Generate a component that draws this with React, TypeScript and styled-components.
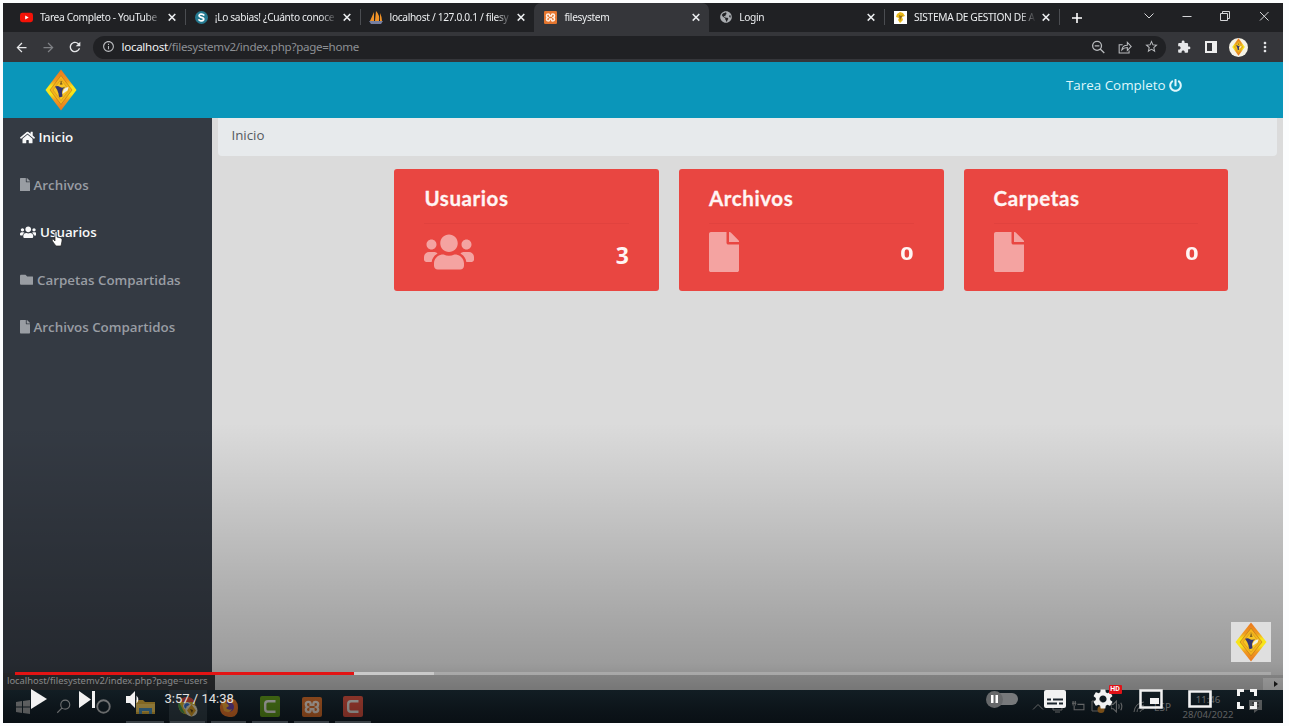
import React from "react";
import styled, { createGlobalStyle } from "styled-components";
import { FaHome, FaFile, FaUsers, FaFolder, FaPowerOff, FaGlobeAmericas } from "react-icons/fa";
import { MdArrowBack, MdArrowForward, MdRefresh, MdInfoOutline, MdExtension, MdStarBorder, MdMoreVert, MdSettings } from "react-icons/md";

const Global = createGlobalStyle`
  * { box-sizing: border-box; }
  body { margin: 0; background: #fcfdfe; font-family: "Open Sans", sans-serif; overflow: hidden; }
  svg { display: block; flex: none; }
`;

const Player = styled.div`
  position: relative;
  display: flex;
  flex-direction: column;
  width: 1280px;
  height: 720px;
  margin: 3px 0 0 3px;
  overflow: hidden;
  background: #dbdbdb;
`;

/* Browser window */
const TabStrip = styled.div`
  display: flex;
  height: 29px;
  padding-left: 7px;
  background: #202124;
  color: #fff;
`;
const Tab = styled.div<{ $active?: boolean; $line?: boolean }>`
  display: flex;
  align-items: center;
  width: 174.8px;
  height: 29px;
  padding: 0 7px 1px 10px;
  border-radius: 7px 7px 0 0;
  background: ${(p) => (p.$active ? "#35363a" : "transparent")};
  color: #eceef0;
  &::after {
    content: "";
    width: 1px;
    height: 16px;
    margin: 0 -8px 0 7px;
    background: ${(p) => (p.$line ? "#4b4d51" : "transparent")};
  }
`;
const TabTitle = styled.span`
  width: 122px;
  margin: 0 4px 0 7px;
  white-space: nowrap;
  font: 10.2px/14px "Noto Sans", sans-serif;
  letter-spacing: -0.34px;
  mask-image: linear-gradient(90deg, #000 106px, transparent 122px);
`;
const Slot = styled.span<{ $w: number }>`
  display: flex;
  flex: none;
  align-items: center;
  justify-content: center;
  width: ${(p) => p.$w}px;
`;
const WindowButtons = styled.div`
  display: flex;
  margin-left: auto;
  align-items: center;
  padding-bottom: 3px;
  color: #d5d6d8;
`;
const Toolbar = styled.div`
  display: flex;
  align-items: center;
  height: 30px;
  padding-left: 5px;
  background: #35363a;
  color: #e6e7e9;
`;
const AddressBar = styled.div`
  display: flex;
  align-items: center;
  width: 1073px;
  height: 23px;
  margin: 0 5px 0 5px;
  padding: 0 2px 1px 9px;
  border-radius: 12px;
  background: #202124;
  color: #b9bbbe;
`;
const Url = styled.span`
  margin: 0 auto 0 6.5px;
  font: 11.6px/20px "Noto Sans", sans-serif;
  letter-spacing: -0.3px;
  color: #8d9094;
  b { font-weight: 400; color: #f0f1f2; }
`;
const Avatar = styled.span`
  display: flex;
  align-items: center;
  justify-content: center;
  width: 19px;
  height: 19px;
  border-radius: 50%;
  background: #f6f3e6;
`;

/* Web page */
const PageHeader = styled.header`
  display: flex;
  justify-content: space-between;
  height: 56px;
  padding: 7px 101px 0 42px;
  background: #0a96ba;
`;
const Account = styled.div`
  display: flex;
  align-items: center;
  gap: 3.5px;
  height: 32px;
  color: #dff6fb;
  font-size: 13.4px;
`;
const PageBody = styled.div`
  display: flex;
  height: 557px;
`;
const Sidebar = styled.nav`
  width: 209px;
  padding-top: 7px;
  background: #343a43;
`;
const NavItem = styled.a<{ $lit?: boolean }>`
  display: flex;
  align-items: center;
  gap: 4px;
  height: 24px;
  margin-bottom: 23.5px;
  padding-left: 16.5px;
  color: ${(p) => (p.$lit ? "#f8f9fa" : "#999da3")};
  font-size: 13.35px;
  font-weight: 600;
  white-space: nowrap;
`;
const Content = styled.main`
  flex: 1;
  padding: 0 6px;
  background: #dbdbdb;
`;
const Breadcrumb = styled.div`
  height: 38px;
  padding: 7px 13.5px;
  border-radius: 0 0 4px 4px;
  background: #e7eaec;
  color: #555a60;
  font-size: 13.3px;
  line-height: 20px;
`;
const Cards = styled.section`
  display: flex;
  gap: 20px;
  padding: 13px 0 0 176.4px;
`;
const Card = styled.article`
  width: 264.6px;
  height: 121.5px;
  padding: 16px 30px 0;
  border-radius: 3px;
  background: #e94641;
  color: #fff5f4;
`;
const CardTitle = styled.h4`
  height: 38px;
  margin: 0;
  font: 700 20.5px/26px Lato, sans-serif;
  letter-spacing: 0.6px;
  -webkit-text-stroke: 0.3px currentColor;
`;
const CardRow = styled.div`
  display: flex;
  align-items: flex-start;
  justify-content: space-between;
  border-top: 1px solid #e1423e;
  padding-top: 8px;
`;
const CardIcon = styled.span<{ $w: number }>`
  color: #f4a3a1;
  svg {
    width: ${(p) => p.$w}px;
    height: 40px;
  }
`;
const Count = styled.b<{ $zero?: boolean }>`
  font: 700 ${(p) => (p.$zero ? 18.5 : 23)}px/28px "Open Sans", sans-serif;
  margin-top: ${(p) => (p.$zero ? 7 : 9)}px;
  transform: scaleX(${(p) => (p.$zero ? 1.25 : 1)});
  transform-origin: right;
`;

/* Desktop edge */
const ScrollRow = styled.div`
  display: flex;
  justify-content: flex-end;
  height: 15px;
  padding-top: 3px;
  background: #c2c2c2;
`;
const ScrollEnd = styled.div`
  display: flex;
  align-items: center;
  justify-content: center;
  width: 20px;
  padding-left: 5px;
  background: #e0e0e0;
`;
const StatusBubble = styled.div`
  position: absolute;
  left: 0;
  top: 670px;
  width: 212px;
  height: 17px;
  padding: 0 4px;
  background: #35373a;
  color: #d0d1d3;
  font: 9.4px/16px "Noto Sans", sans-serif;
  white-space: nowrap;
`;
const Taskbar = styled.div`
  display: flex;
  height: 33px;
  background: linear-gradient(#1d303b, #14202a);
  color: #c6c9cb;
`;
const Task = styled.div<{ $w: number; $open?: boolean; $active?: boolean }>`
  display: flex;
  align-items: center;
  justify-content: center;
  width: ${(p) => p.$w}px;
  background: ${(p) => (p.$active ? "#34434d" : "transparent")};
  background-clip: content-box;
  padding: 0 1.5px;
  position: relative;
  &::after {
    content: "";
    position: absolute;
    left: 3px;
    right: 3px;
    bottom: 0;
    height: 2px;
    background: ${(p) => (p.$open ? "#75848f" : "transparent")};
  }
`;
const AppTile = styled.span<{ $c: string }>`
  display: flex;
  align-items: center;
  justify-content: center;
  width: 20px;
  height: 21px;
  border-radius: 2px;
  background: ${(p) => p.$c};
`;
const Tray = styled.div`
  display: flex;
  align-items: center;
  margin-left: auto;
  padding-right: 10px;
  font: 10px/14px "Noto Sans", sans-serif;
  color: #b5b8ba;
`;
const Clock = styled.div`
  width: 60px;
  margin-left: 3px;
  text-align: center;
  font: 9.6px/15px "Noto Sans", sans-serif;
`;

/* Video overlay */
const Shade = styled.div`
  position: absolute;
  inset: 420px 0 0 0;
  background: linear-gradient(rgba(0,0,0,0), rgba(0,0,0,.05) 15%, rgba(0,0,0,.16) 45%, rgba(0,0,0,.29) 80%, rgba(0,0,0,.4) 90%, rgba(0,0,0,.52));
`;
const Watermark = styled.div`
  position: absolute;
  left: 1228px;
  top: 619px;
  display: flex;
  align-items: center;
  justify-content: center;
  width: 40px;
  height: 40px;
  background: #dfdfdf;
`;
const Progress = styled.div`
  position: absolute;
  left: 12px;
  right: 12px;
  top: 669px;
  display: flex;
  height: 3px;
  background: rgba(255,255,255,.2);
`;
const Part = styled.i<{ $w: number; $c: string }>`
  width: ${(p) => p.$w}px;
  background: ${(p) => p.$c};
`;
const Controls = styled.div`
  position: absolute;
  left: 0;
  right: 0;
  top: 682px;
  display: flex;
  align-items: center;
  justify-content: space-between;
  height: 28px;
  padding: 0 26px 0 28px;
  color: #f2f2f2;
`;
const Group = styled.div<{ $gap: number }>`
  display: flex;
  align-items: center;
  gap: ${(p) => p.$gap}px;
`;
const Time = styled.span`
  margin-left: -7px;
  color: #e2e2e2;
  font: 13px/16px Roboto, sans-serif;
  white-space: nowrap;
`;
const Toggle = styled.span`
  display: flex;
  align-items: center;
  width: 32px;
  height: 12px;
  margin-right: 1px;
  border-radius: 6px;
  background: linear-gradient(90deg, transparent 8px, #77797b 8px);
`;
const Knob = styled.span`
  display: flex;
  align-items: center;
  justify-content: center;
  width: 17px;
  height: 17px;
  border-radius: 50%;
  background: #66686a;
`;
const Gear = styled.span`
  position: relative;
`;
const HdBadge = styled.span`
  position: absolute;
  left: 18px;
  top: -2px;
  width: 13px;
  height: 9px;
  border-radius: 1px;
  background: #e01217;
  color: #fff;
  font: 700 7px/9px Roboto, sans-serif;
  text-align: center;
`;
const Pointer = styled.svg`
  position: absolute;
  left: 48px;
  top: 227px;
`;

const Emblem = ({ w, h }: { w: number; h: number }) => (
  <svg width={w} height={h} viewBox="0 0 32 42" preserveAspectRatio="none">
    <defs>
      <linearGradient id="rim" x1="0" y1="0" x2="0" y2="1">
        <stop offset="0" stopColor="#e9761f" />
        <stop offset=".28" stopColor="#f09a20" />
        <stop offset=".42" stopColor="#f8e41a" />
        <stop offset=".6" stopColor="#f8e41a" />
        <stop offset=".75" stopColor="#f09a20" />
        <stop offset="1" stopColor="#e9761f" />
      </linearGradient>
    </defs>
    <path d="M16 .5 31.500 21 16 41.500.5 21Z" fill="url(#rim)" />
    <path d="M16 6.500 27 21 16 35.500 5 21Z" fill="#f5b31c" stroke="#b0741c" strokeWidth=".6" />
    <path d="M16 10.500 24 21 16 31.500 8 21Z" fill="#f8c522" stroke="#b8801c" strokeWidth=".4" />
    <path d="M10 17.500q3-1 5 .5 3 1.500 5.500-.5-3 2-3.500 5.500l.5 4.500-3 1q-1-2-1-4-.5-3-3.500-7Z" fill="#343671" />
    <path d="M17.500 25q0-6 6-7-.5 4-2.500 4.500Z" fill="#f1f0e4" />
    <path d="M15.600 12h1v2.500h.8v1h-2.500v-1h.7z" fill="#62441c" />
  </svg>
);

const Xampp = ({ s }: { s: number }) => (
  <svg width={s} height={s} viewBox="0 0 20 20">
    <rect width="20" height="20" rx="2" fill="#e5762f" />
    <path d="M6.500 4.800q-2.700 0-2.700 2.600 0 1.800 1.700 2.600-1.700.8-1.700 2.600 0 2.600 2.700 2.600 2.100 0 2.100-2.200v-.8h2.800v.8q0 2.200 2.100 2.200 2.700 0 2.700-2.600 0-1.800-1.700-2.600 1.700-.8 1.700-2.600 0-2.600-2.700-2.600-2.100 0-2.100 2.200v.8H8.600V7q0-2.200-2.100-2.200Z" fill="none" stroke="#fff0e4" strokeWidth="2.300" />
  </svg>
);

const favicons = {
  youtube: <svg width="13" height="13" viewBox="0 0 13 13"><rect y="1.800" width="13" height="9.400" rx="2.400" fill="#f41207" /><path d="M5.200 4.500v4L8.700 6.500z" fill="#fff" /></svg>,
  scribd: <svg width="13" height="13" viewBox="0 0 13 13"><circle cx="6.500" cy="6.500" r="6.500" fill="#257a91" /><path d="M9.300 4.500Q8 2.700 5.800 3.100 3.500 3.600 4.300 5.200 5 6.200 7.200 6.600 9.300 7.200 8.600 8.800 7.600 10.400 5.300 9.800 4 9.400 3.600 8.300" fill="none" stroke="#fff" strokeWidth="1.700" /></svg>,
  pma: <svg width="14" height="13" viewBox="0 0 14 13"><path d="M1 10 5 1v9ZM6 10 7 0q4 4 3 10ZM11 10V2q2 4 2 8Z" fill="#f29327" /><path d="M0 10h14l-2 3H2Z" fill="#777fa0" /></svg>,
  xampp: <Xampp s={13} />,
  globe: <FaGlobeAmericas size={12} color="#a9acb0" />,
  emblem: <svg width="13" height="13" viewBox="0 0 13 13"><path d="M0 0h13v13H0z" fill="#fff" /><path d="M3 3 6 1l3 1 2 3-3 1 1 3-3 3-2-3 1-2-3-1Z" fill="#e9b818" /><path d="m5 4 2 1 2-1-2 3-1 3Z" fill="#8b6820" /></svg>,
};

type TabInfo = { icon: keyof typeof favicons; title: string; active?: boolean; line?: boolean };
const tabs: TabInfo[] = [
  { icon: "youtube", title: "Tarea Completo - YouTube", line: true },
  { icon: "scribd", title: "¡Lo sabias! ¿Cuánto conoce", line: true },
  { icon: "pma", title: "localhost / 127.0.0.1 / filesy" },
  { icon: "xampp", title: "filesystem", active: true },
  { icon: "globe", title: "Login", line: true },
  { icon: "emblem", title: "SISTEMA DE GESTION DE A", line: true },
];

const Line = ({ d, s = 12, w = 1 }: { d: string; s?: number; w?: number }) => (
  <svg width={s} height={s} viewBox="0 0 12 12" fill="none" stroke="currentColor" strokeWidth={w}><path d={d} /></svg>
);

const CamC = () => (
  <svg width="14" height="15" viewBox="0 0 14 15"><path d="M12.500 2.200H5Q2.200 2.200 2.200 5v5Q2.200 12.800 5 12.800h7.500" fill="none" stroke="#f2f2ec" strokeWidth="2.400" /></svg>
);

const FileGlyph = styled(FaFile)`
  width: 10px;
`;

export default function App() {
  return (
    <>
      <Global />
      <Player>
        <TabStrip>
          {tabs.map((t) => (
            <Tab key={t.title} $active={t.active} $line={t.line}>
              <Slot $w={13}>{favicons[t.icon]}</Slot>
              <TabTitle>{t.title}</TabTitle>
              <Line w={1.5} d="M2.700 3 9.300 9.600M9.300 3 2.700 9.600" />
            </Tab>
          ))}
          <Slot $w={36}><Line w={1.6} d="M6 1v10M1 6h10" /></Slot>
          <WindowButtons>
            <Slot $w={38}><Line d="M1.500 3.500 6 8l4.500-4.500" /></Slot>
            <Slot $w={38}><Line d="M1.500 6.500h9" /></Slot>
            <Slot $w={38}><Line d="M1.500 3.500h7v7h-7zM3.500 3.500v-2h7v7h-2" /></Slot>
            <Slot $w={39}><Line d="M2 2l8.500 8.500M10.500 2 2 10.500" /></Slot>
          </WindowButtons>
        </TabStrip>

        <Toolbar>
          <Slot $w={27}><MdArrowBack size={15} /></Slot>
          <Slot $w={27}><MdArrowForward size={15} color="#7f8185" /></Slot>
          <Slot $w={26}><MdRefresh size={16} /></Slot>
          <AddressBar>
            <MdInfoOutline size={13} />
            <Url><b>localhost</b>/filesystemv2/index.php?page=home</Url>
            <Slot $w={27}><Line s={14} w={1.1} d="M9 5a3.800 3.800 0 1 1-7.600 0a3.800 3.800 0 0 1 7.600 0ZM7.900 7.700l3.500 3.500M3.200 5h4" /></Slot>
            <Slot $w={27}><Line s={14} w={0.9} d="M4 4H1v7.200h8.500V9M3.300 8.500q.5-4 4.700-4V2l3.300 3.500L8 9V6.500q-3 0-4.700 2Z" /></Slot>
            <Slot $w={26}><MdStarBorder size={15} /></Slot>
          </AddressBar>
          <Slot $w={26}><MdExtension size={14} /></Slot>
          <Slot $w={28}><svg width="12" height="12"><path d="M1 1h10v10H1z" fill="none" stroke="#eee" strokeWidth="2" /><path d="M7 0h5v12H7z" fill="#eee" /></svg></Slot>
          <Slot $w={26}><Avatar><Emblem w={13} h={18} /></Avatar></Slot>
          <Slot $w={27}><MdMoreVert size={16} /></Slot>
        </Toolbar>

        <PageHeader>
          <Emblem w={32} h={42} />
          <Account>Tarea Completo <FaPowerOff size={13} /></Account>
        </PageHeader>

        <PageBody>
          <Sidebar>
            <NavItem $lit><FaHome size={15} />Inicio</NavItem>
            <NavItem><FileGlyph size={13.5} />Archivos</NavItem>
            <NavItem $lit><FaUsers size={16.5} />Usuarios</NavItem>
            <NavItem><FaFolder size={13.5} />Carpetas Compartidas</NavItem>
            <NavItem><FileGlyph size={13.5} />Archivos Compartidos</NavItem>
          </Sidebar>
          <Content>
            <Breadcrumb>Inicio</Breadcrumb>
            <Cards>
              <Card>
                <CardTitle>Usuarios</CardTitle>
                <CardRow><CardIcon $w={50}><FaUsers /></CardIcon><Count>3</Count></CardRow>
              </Card>
              <Card>
                <CardTitle>Archivos</CardTitle>
                <CardRow><CardIcon $w={30}><FaFile /></CardIcon><Count $zero>0</Count></CardRow>
              </Card>
              <Card>
                <CardTitle>Carpetas</CardTitle>
                <CardRow><CardIcon $w={30}><FaFile /></CardIcon><Count $zero>0</Count></CardRow>
              </Card>
            </Cards>
          </Content>
        </PageBody>

        <ScrollRow>
          <ScrollEnd><svg width="4" height="6"><path d="M0 0 4 3 0 6Z" fill="#222" /></svg></ScrollEnd>
        </ScrollRow>
        <StatusBubble>localhost/filesystemv2/index.php?page=users</StatusBubble>

        <Taskbar>
          <Task $w={40}><svg width="14" height="14"><path d="M0 2 6 1v5.500H0ZM7 1l7-1v6.500H7ZM0 7.500h6V13L0 12ZM7 7.500h7V14l-7-1Z" fill="#a5a8aa" /></svg></Task>
          <Task $w={40}><Line s={15} w={0.9} d="M11 4.500a3.600 3.600 0 1 1-7.200 0a3.600 3.600 0 0 1 7.200 0ZM4.900 7.100 1 11" /></Task>
          <Task $w={40}><Line s={15} w={1.5} d="M11 6A5 5 0 1 1 1 6a5 5 0 0 1 10 0Z" /></Task>
          <Task $w={44} $open><svg width="19" height="16"><path d="M0 1h7l2 2h10v12H0Z" fill="#e7b83e" /><path d="M0 5h19v8H0Z" fill="#ffd663" /><path d="M3 15V9h13v6h-3v-3H6v3Z" fill="#4f98c7" /></svg></Task>
          <Task $w={41} $open $active>
            <svg width="20" height="20" viewBox="0 0 20 20"><circle cx="9" cy="9" r="8.500" fill="#e2bd35" /><path d="M1 5A9 9 0 0 1 17 5H9Z" fill="#df5044" /><path d="m1 5 6 12A9 9 0 0 1 1 5Z" fill="#4aa251" /><circle cx="9" cy="9" r="3.500" fill="#3979d5" stroke="#fff" /><circle cx="13.500" cy="13.500" r="6" fill="#f2ebd0" /><path d="m13.500 7.500 4.500 6-4.500 6-4.500-6Z" fill="#e5a628" /><path d="m12 12 3 1-1 3Z" fill="#56401f" /></svg>
          </Task>
          <Task $w={41} $open>
            <svg width="20" height="20" viewBox="0 0 20 20"><path d="M10 1q9 0 9 10t-9 9Q0 19 1 9q1-4 4-6l1 2q1-3 4-4Z" fill="#f57d2e" /><circle cx="10" cy="10" r="5" fill="#744ab0" /><path d="M3 6q5-1 7 3l-3 2q3 3 6 1-2 5-8 2Z" fill="#ffb23d" /></svg>
          </Task>
          <Task $w={42} $open><AppTile $c="#67a51e"><CamC /></AppTile></Task>
          <Task $w={41} $open><Xampp s={20} /></Task>
          <Task $w={42} $open><AppTile $c="#e75745"><CamC /></AppTile></Task>
          <Tray>
            <Slot $w={20}><Line d="M1 8.500 6 3.500l5 5" /></Slot>
            <Slot $w={20}><Line d="M1 5h9v4H1zM3 11h5" /></Slot>
            <Slot $w={20}><Line s={13} d="M0 3h4M1 1v4M3 1v4M2 5v4h9V4H5" /></Slot>
            <Slot $w={20}><svg width="14" height="13"><path d="M1 1h9v10H1z" fill="none" stroke="#aaa" /><circle cx="10" cy="9.500" r="3.500" fill="#e4942e" /></svg></Slot>
            <Slot $w={19}><Line s={13} d="M0 4h2l3-3v10L2 8H0ZM7 4q1 2 0 4M9 2.500q2 3.500 0 7" /></Slot>
            <Slot $w={23}><Line s={12} d="M1 11Q2 2 11 1M4 11q0-5 7-7M7 11q0-2 4-3" /></Slot>
            <Slot $w={25}>ESP</Slot>
            <Clock>11:46<br />28/04/2022</Clock>
            <Slot $w={35}><svg width="13" height="13"><path d="M0 0h13v10H9l-4 3v-3H0Z" fill="#999ea1" /><path d="M3 3h7M3 6h7" stroke="#333" /></svg></Slot>
          </Tray>
        </Taskbar>

        <Shade />
        <Pointer width="12" height="17" viewBox="0 0 12 17">
          <path d="M4 9V2q1-2 2 0v5l4 1q1.500.5 1 3l-1 5H5Q1 11 1 10q1-2 3 1Z" fill="#fff" stroke="#222" strokeWidth=".7" />
        </Pointer>
        <Watermark><Emblem w={32} h={40} /></Watermark>
        <Progress>
          <Part $w={339} $c="#e21414" />
          <Part $w={80} $c="#c9c9c9" />
        </Progress>
        <Controls>
          <Group $gap={31.5}>
            <svg width="16" height="20"><path d="M0 0 16 10 0 20Z" fill="currentColor" /></svg>
            <svg width="16" height="17"><path d="M0 0 12 8.500 0 17ZM13 0h3v17h-3z" fill="currentColor" /></svg>
            <svg width="14" height="17"><path d="M0 5h4l5-5v17l-5-5H0ZM10.500 4.500q3.500 4 0 8Z" fill="currentColor" /></svg>
            <Time>3:57 / 14:38</Time>
          </Group>
          <Group $gap={24.8}>
            <Toggle><Knob><svg width="7" height="8"><path d="M0 0h2.500v8H0zM4.500 0H7v8H4.500z" fill="#fff" /></svg></Knob></Toggle>
            <svg width="22" height="18"><rect width="22" height="18" rx="2" fill="currentColor" /><path d="M3 9.500h4M9 9.500h10M3 13.500h10M15 13.500h4" stroke="#1a242c" strokeWidth="2" /></svg>
            <Gear><MdSettings size={24} /><HdBadge>HD</HdBadge></Gear>
            <svg width="24" height="20"><path d="M1.500 1.500h21v17h-21z" fill="none" stroke="currentColor" strokeWidth="2.500" /><path d="M11 9h9v6h-9z" fill="currentColor" /></svg>
            <svg width="24" height="18"><path d="M1.500 1.500h21v15h-21z" fill="none" stroke="currentColor" strokeWidth="2.600" /></svg>
            <svg width="20" height="20"><path d="M1.500 7V1.500H7M13 1.500h5.500V7M18.500 13v5.500H13M7 18.500H1.500V13" fill="none" stroke="currentColor" strokeWidth="3" /></svg>
          </Group>
        </Controls>
      </Player>
    </>
  );
}
